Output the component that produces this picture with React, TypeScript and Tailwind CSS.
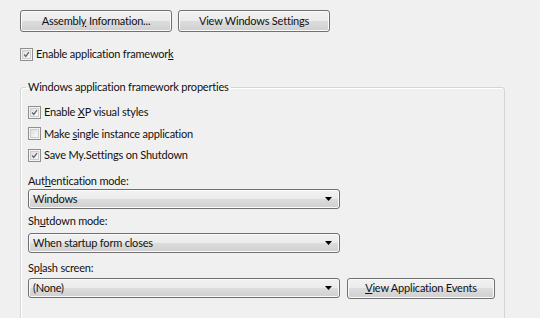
import React from "react";

const font = { fontFamily: '"Segoe UI", Lato, "Noto Sans", sans-serif' };

function Btn({ children, className = "" }: { children: React.ReactNode; className?: string }) {
  return (
    <div
      className={`flex items-center justify-center rounded-[3px] border border-[#707070] bg-[linear-gradient(#f2f2f2_0%,#ebebeb_50%,#dddddd_50%,#cfcfcf_100%)] shadow-[inset_0_0_0_1px_#fbfbfb] text-[11px] text-[#111] ${className}`}
    >
      {children}
    </div>
  );
}

function Check({ checked, children }: { checked?: boolean; children: React.ReactNode }) {
  return (
    <div className="h-[16px] flex items-center gap-[3px]">
      <div className="w-[13px] h-[13px] border border-[#8e8f8f] bg-[#f4f4f4] p-[1px]">
        <div className="w-full h-full border border-[#cdcdcd] bg-[linear-gradient(135deg,#dedede,#fbfbfb)] flex items-center justify-center">
          {checked && (
            <svg width="9" height="9" viewBox="0 0 9 9">
              <path d="M1.5 4.5 L3.6 7 L7.6 1.5" fill="none" stroke="#5b6170" strokeWidth="1.5" />
            </svg>
          )}
        </div>
      </div>
      <span className="text-[11px] leading-[16px] text-[#111]">{children}</span>
    </div>
  );
}

function Combo({ value, className = "" }: { value: string; className?: string }) {
  return (
    <div
      className={`h-[20px] flex items-center justify-between pl-[4px] pr-[7px] rounded-[3px] border border-[#707070] bg-[linear-gradient(#f2f2f2_0%,#ebebeb_50%,#dddddd_50%,#cfcfcf_100%)] shadow-[inset_0_0_0_1px_#fbfbfb] text-[11px] text-[#111] ${className}`}
    >
      <span>{value}</span>
      <svg width="7" height="4" viewBox="0 0 7 4">
        <path d="M0 0 H7 L3.5 4 Z" fill="#000" />
      </svg>
    </div>
  );
}

export default function App() {
  return (
    <div
      className="w-[540px] h-[318px] overflow-hidden bg-[#f0f0f0] pl-[20px] pt-[10px] tracking-[-0.2px]"
      style={font}
    >
      {/* Top buttons */}
      <div className="flex gap-[6px]">
        <Btn className="w-[152px] h-[22px]">
          Assembl<u>y</u>&nbsp;Information...
        </Btn>
        <Btn className="w-[152px] h-[22px]">View Windows Settings</Btn>
      </div>

      <div className="mt-[14px]">
        <Check checked>
          Enable application framewor<u>k</u>
        </Check>
      </div>

      {/* Group box */}
      <fieldset className="mt-[17px] w-[485px] h-[300px] border border-[#d5d5d5] rounded-[3px] shadow-[inset_1px_1px_0_#ffffff] pl-[7px]">
        <legend className="ml-[-2px] px-[2px] text-[11px] leading-[16px] text-[#111]">
          Windows application framework properties
        </legend>

        <div className="pt-[9px] flex flex-col gap-[5.5px]">
          <Check checked>
            Enable <u>X</u>P visual styles
          </Check>
          <Check>
            Make <u>s</u>ingle instance application
          </Check>
          <Check checked>Save My.Settings on Shutdown</Check>
        </div>

        <div className="mt-[10px] text-[11px] leading-[16px] text-[#111]">
          Aut<u>h</u>entication mode:
        </div>
        <Combo value="Windows" className="w-[312px]" />

        <div className="mt-[4px] text-[11px] leading-[16px] text-[#111]">
          Sh<u>u</u>tdown mode:
        </div>
        <Combo value="When startup form closes" className="mt-[4px] w-[312px]" />

        <div className="mt-[7px] text-[11px] leading-[16px] text-[#111]">
          Sp<u>l</u>ash screen:
        </div>
        <div className="mt-[2px] flex gap-[7px]">
          <Combo value="(None)" className="w-[312px]" />
          <Btn className="w-[148px] h-[21px]">
            <span>
              <u>V</u>iew Application Events
            </span>
          </Btn>
        </div>
      </fieldset>
    </div>
  );
}
